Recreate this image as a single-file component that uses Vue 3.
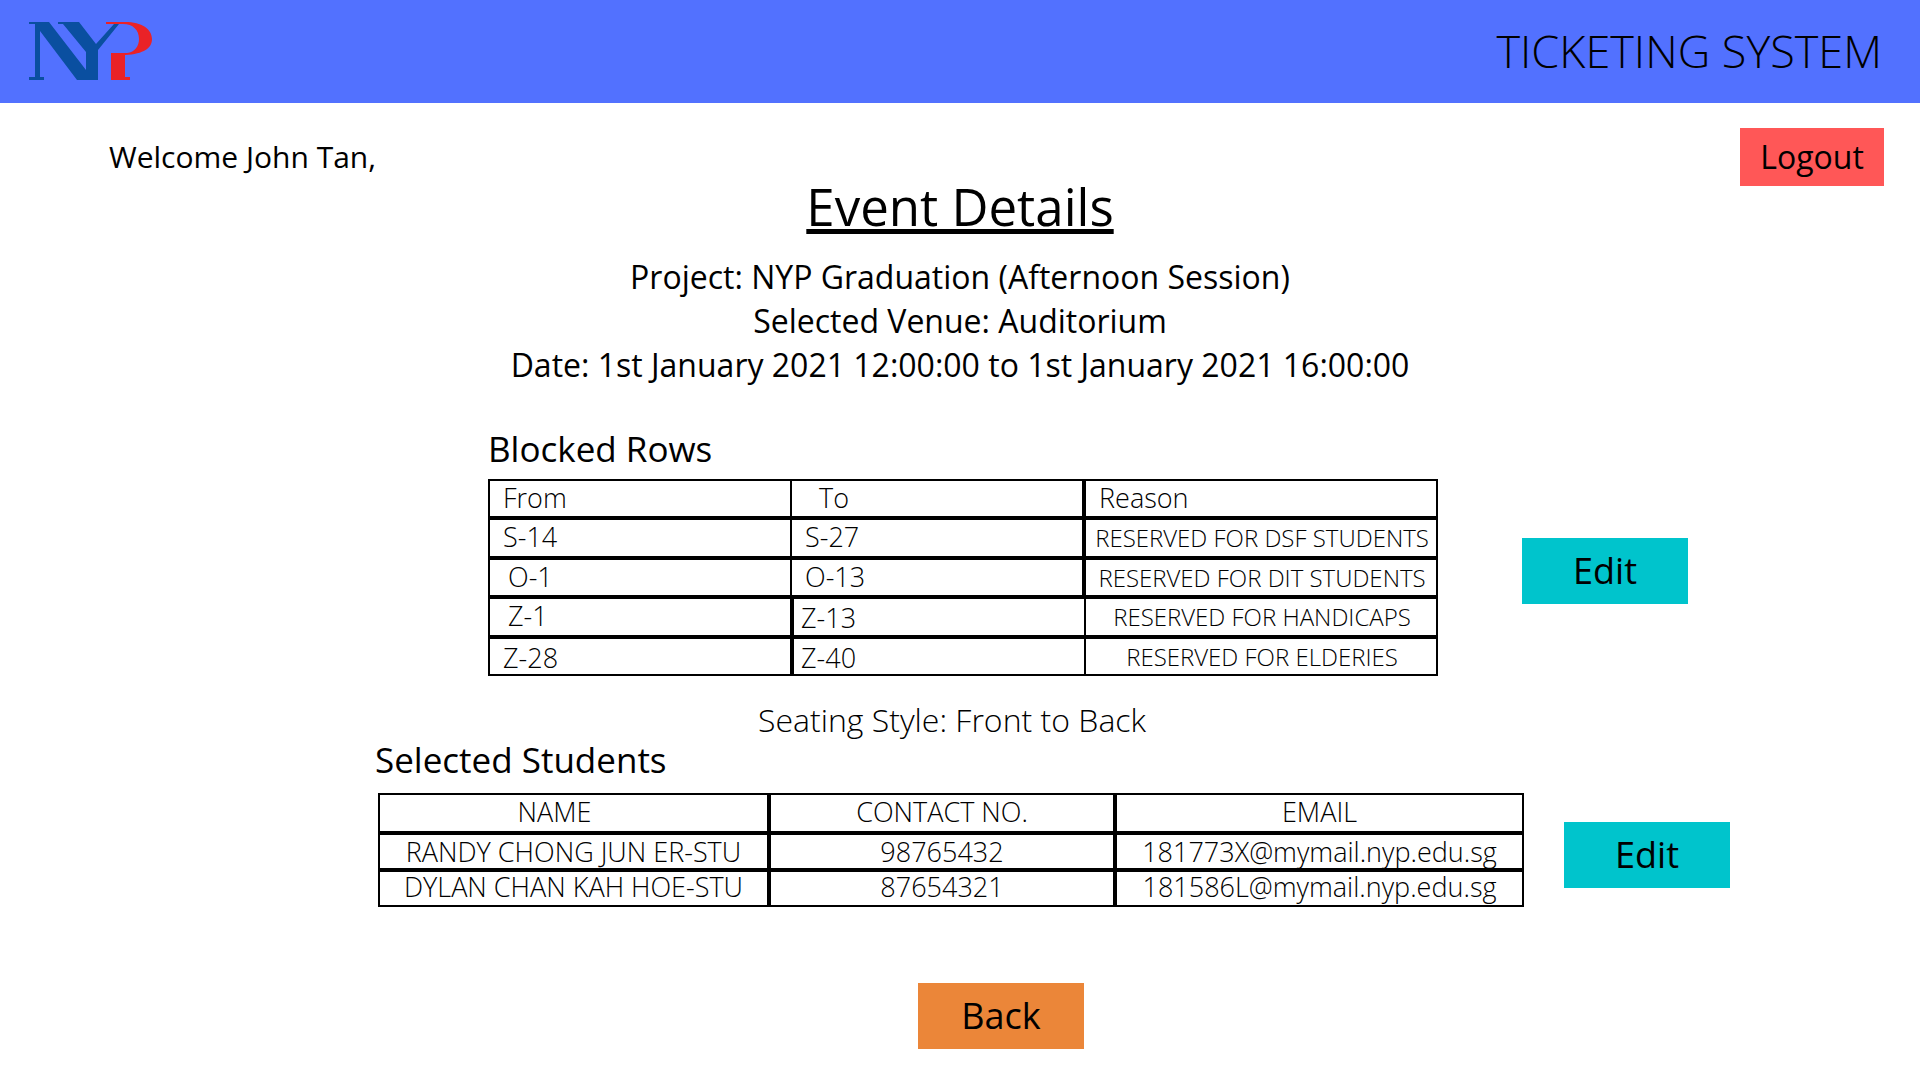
<script setup>
const details = [
  'Project: NYP Graduation (Afternoon Session)',
  'Selected Venue: Auditorium',
  'Date: 1st January 2021 12:00:00 to 1st January 2021 16:00:00',
]

const blockedRows = [
  { from: 'S-14', to: 'S-27', reason: 'RESERVED FOR DSF STUDENTS', fromClass: 'inset', toClass: 'inset', divider: 'divider-right' },
  { from: 'O-1', to: 'O-13', reason: 'RESERVED FOR DIT STUDENTS', fromClass: 'inset-wide', toClass: 'inset', divider: 'divider-right' },
  { from: 'Z-1', to: 'Z-13', reason: 'RESERVED FOR HANDICAPS', fromClass: 'inset-wide', toClass: 'inset-narrow low', divider: 'divider-left' },
  { from: 'Z-28', to: 'Z-40', reason: 'RESERVED FOR ELDERIES', fromClass: 'inset low', toClass: 'inset-narrow low', divider: 'divider-left' },
]

const students = [
  { name: 'RANDY CHONG JUN ER-STU', contact: '98765432', email: '181773X@mymail.nyp.edu.sg' },
  { name: 'DYLAN CHAN KAH HOE-STU', contact: '87654321', email: '181586L@mymail.nyp.edu.sg' },
]
</script>

<template>
  <div class="page">
    <header class="topbar">
      <svg class="logo" viewBox="0 0 124 60" role="img" aria-label="NYP">
        <g fill="#0a4fa0">
          <path d="M0 1H20L57 49V31L34 3H29V1H50L67 23L85 3H90L69 29V59H48L11 10V56H15V59H0V56H6V3H0Z" />
        </g>
        <path
          fill="#ea2227"
          d="M77 1H96C113 1 123 8 123 18C123 27 115 33 96 34V56H101V59H82V32H98C106 31 110 25 110 18C110 9 104 3 94 3H77Z"
        />
      </svg>
      <span class="brand">TICKETING SYSTEM</span>
    </header>

    <main>
      <div class="greeting">
        <p>Welcome John Tan,</p>
        <button type="button" class="logout">Logout</button>
      </div>

      <h1>Event Details</h1>
      <div class="details">
        <p v-for="line in details" :key="line">{{ line }}</p>
      </div>

      <section class="section blocked">
        <h2 id="blocked-title">Blocked Rows</h2>
        <table aria-labelledby="blocked-title">
          <colgroup>
            <col class="col-from" />
            <col class="col-to" />
            <col class="col-reason" />
          </colgroup>
          <thead>
            <tr>
              <th scope="col" class="inset">From</th>
              <th scope="col" class="inset-heading divider-right">To</th>
              <th scope="col" class="inset">Reason</th>
            </tr>
          </thead>
          <tbody>
            <tr v-for="row in blockedRows" :key="row.from">
              <td :class="row.fromClass">{{ row.from }}</td>
              <td :class="[row.toClass, row.divider]">{{ row.to }}</td>
              <td class="reason">{{ row.reason }}</td>
            </tr>
          </tbody>
        </table>
        <button type="button" class="edit">Edit</button>
      </section>

      <p class="seating">Seating Style: Front to Back</p>

      <section class="section students">
        <h2 id="students-title">Selected Students</h2>
        <table aria-labelledby="students-title">
          <colgroup>
            <col class="col-name" />
            <col class="col-contact" />
            <col class="col-email" />
          </colgroup>
          <thead>
            <tr>
              <th scope="col" class="name-heading">NAME</th>
              <th scope="col">CONTACT NO.</th>
              <th scope="col">EMAIL</th>
            </tr>
          </thead>
          <tbody>
            <tr v-for="student in students" :key="student.contact">
              <td>{{ student.name }}</td>
              <td>{{ student.contact }}</td>
              <td>{{ student.email }}</td>
            </tr>
          </tbody>
        </table>
        <button type="button" class="edit">Edit</button>
      </section>

      <div class="actions">
        <button type="button" class="back">Back</button>
      </div>
    </main>
  </div>
</template>

<style>
body {
  margin: 0;
  background: #fff;
}
</style>

<style scoped>
.page {
  color: #000;
  font-family: "Open Sans", "Noto Sans", sans-serif;
  font-size: 32px;
}

p,
h1,
h2 {
  margin: 0;
  font-weight: 400;
}

button {
  border: 0;
  padding: 0;
  color: #000;
  font-family: inherit;
  font-size: 36px;
  line-height: 48px;
  cursor: pointer;
}

.topbar {
  display: flex;
  align-items: flex-start;
  justify-content: space-between;
  padding: 21px 38px 22px 29px;
  background: #5271ff;
}

.logo {
  width: 124px;
  height: 60px;
}

.brand {
  font-size: 45px;
  font-weight: 300;
  line-height: 60px;
}

.greeting {
  display: flex;
  align-items: center;
  justify-content: space-between;
  padding: 25px 36px 0 109px;
  font-size: 30px;
  line-height: 40px;
}

.logout {
  width: 144px;
  height: 58px;
  background: #ff5757;
  font-size: 32px;
}

h1 {
  font-size: 51px;
  line-height: 40px;
  text-align: center;
  text-decoration: underline;
  text-decoration-thickness: 5px;
  text-underline-offset: 3px;
  text-decoration-skip-ink: none;
}

.details {
  margin-top: 29px;
  line-height: 44px;
  text-align: center;
}

.section {
  display: grid;
}

.blocked {
  grid-template-columns: 488fr 950fr 482fr;
  margin-top: 42px;
}

.students {
  grid-template-columns: 378fr 1146fr 396fr;
}

h2 {
  grid-column: 2 / 4;
  font-size: 35px;
  line-height: 40px;
}

.blocked h2 {
  margin-bottom: 10px;
}

.students h2 {
  margin: 0 0 13px -3px;
}

table {
  grid-column: 2;
  width: 100%;
  border-collapse: separate;
  border-spacing: 0;
  table-layout: fixed;
  font-size: 27px;
  line-height: 30px;
}

th,
td {
  box-sizing: border-box;
  height: 39px;
  padding: 2px 0 0;
  border: 2px solid #000;
  font-weight: 300;
  text-align: center;
  vertical-align: top;
  white-space: nowrap;
}

.blocked table {
  height: 197px;
}

.blocked th,
.blocked td {
  text-align: left;
}

.blocked td.reason {
  padding-top: 3px;
  padding-left: 2px;
  font-size: 24px;
  text-align: center;
}

.blocked .inset-narrow {
  padding-left: 7px;
}

.blocked .inset {
  padding-left: 13px;
}

.blocked .inset-wide {
  padding-left: 18px;
}

.blocked .inset-heading {
  padding-left: 27px;
}

.blocked .low {
  padding-top: 4px;
}

.divider-right {
  border-left: 0;
}

.divider-left {
  border-right: 0;
}

.col-from {
  width: 304px;
}

.col-to {
  width: 292px;
}

.col-reason {
  width: 354px;
}

.col-name {
  width: 391px;
}

.col-contact {
  width: 346px;
}

.col-email {
  width: 409px;
}

.students th {
  height: 40px;
}

.students td {
  height: 37px;
  padding-top: 0;
}

.students tbody tr:first-child td {
  padding-top: 2px;
}

.students .name-heading {
  padding-right: 38px;
}

.edit {
  grid-column: 3;
  width: 166px;
  height: 66px;
  background: #00c4cc;
}

.blocked .edit {
  margin: 59px 0 0 84px;
}

.students .edit {
  margin: 29px 0 0 40px;
}

.seating {
  margin-top: 24px;
  padding-right: 16px;
  font-weight: 300;
  line-height: 40px;
  text-align: center;
}

.actions {
  display: flex;
  justify-content: center;
  padding: 76px 0 32px 82px;
}

.back {
  width: 166px;
  height: 66px;
  background: #eb8639;
}
</style>
